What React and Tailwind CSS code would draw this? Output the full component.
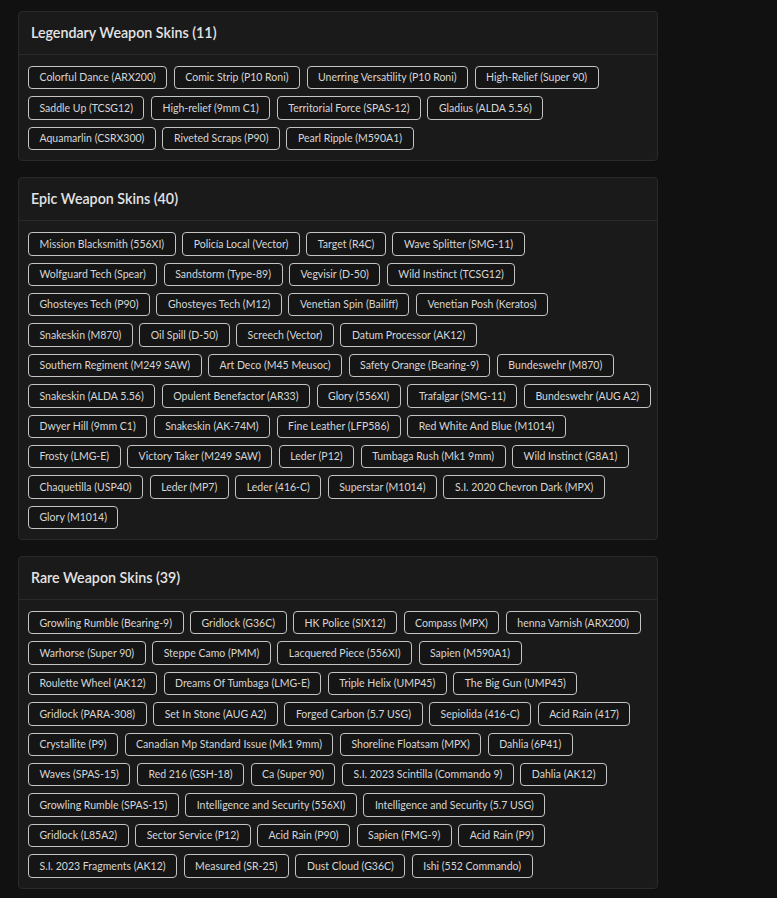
import React from "react";

// rows are kept as the page shows them so each line breaks at the same chip
const SECTIONS = [
  {
    title: "Legendary Weapon Skins",
    rows: [
      ["Colorful Dance (ARX200)", "Comic Strip (P10 Roni)", "Unerring Versatility (P10 Roni)", "High-Relief (Super 90)"],
      ["Saddle Up (TCSG12)", "High-relief (9mm C1)", "Territorial Force (SPAS-12)", "Gladius (ALDA 5.56)"],
      ["Aquamarlin (CSRX300)", "Riveted Scraps (P90)", "Pearl Ripple (M590A1)"],
    ],
  },
  {
    title: "Epic Weapon Skins",
    rows: [
      ["Mission Blacksmith (556XI)", "Policía Local (Vector)", "Target (R4C)", "Wave Splitter (SMG-11)"],
      ["Wolfguard Tech (Spear)", "Sandstorm (Type-89)", "Vegvisir (D-50)", "Wild Instinct (TCSG12)"],
      ["Ghosteyes Tech (P90)", "Ghosteyes Tech (M12)", "Venetian Spin (Bailiff)", "Venetian Posh (Keratos)"],
      ["Snakeskin (M870)", "Oil Spill (D-50)", "Screech (Vector)", "Datum Processor (AK12)"],
      ["Southern Regiment (M249 SAW)", "Art Deco (M45 Meusoc)", "Safety Orange (Bearing-9)", "Bundeswehr (M870)"],
      ["Snakeskin (ALDA 5.56)", "Opulent Benefactor (AR33)", "Glory (556XI)", "Trafalgar (SMG-11)", "Bundeswehr (AUG A2)"],
      ["Dwyer Hill (9mm C1)", "Snakeskin (AK-74M)", "Fine Leather (LFP586)", "Red White And Blue (M1014)"],
      ["Frosty (LMG-E)", "Victory Taker (M249 SAW)", "Leder (P12)", "Tumbaga Rush (Mk1 9mm)", "Wild Instinct (G8A1)"],
      ["Chaquetilla (USP40)", "Leder (MP7)", "Leder (416-C)", "Superstar (M1014)", "S.I. 2020 Chevron Dark (MPX)"],
      ["Glory (M1014)"],
    ],
  },
  {
    title: "Rare Weapon Skins",
    rows: [
      ["Growling Rumble (Bearing-9)", "Gridlock (G36C)", "HK Police (SIX12)", "Compass (MPX)", "henna Varnish (ARX200)"],
      ["Warhorse (Super 90)", "Steppe Camo (PMM)", "Lacquered Piece (556XI)", "Sapien (M590A1)"],
      ["Roulette Wheel (AK12)", "Dreams Of Tumbaga (LMG-E)", "Triple Helix (UMP45)", "The Big Gun (UMP45)"],
      ["Gridlock (PARA-308)", "Set In Stone (AUG A2)", "Forged Carbon (5.7 USG)", "Sepiolida (416-C)", "Acid Rain (417)"],
      ["Crystallite (P9)", "Canadian Mp Standard Issue (Mk1 9mm)", "Shoreline Floatsam (MPX)", "Dahlia (6P41)"],
      ["Waves (SPAS-15)", "Red 216 (GSH-18)", "Ca (Super 90)", "S.I. 2023 Scintilla (Commando 9)", "Dahlia (AK12)"],
      ["Growling Rumble (SPAS-15)", "Intelligence and Security (556XI)", "Intelligence and Security (5.7 USG)"],
      ["Gridlock (L85A2)", "Sector Service (P12)", "Acid Rain (P90)", "Sapien (FMG-9)", "Acid Rain (P9)"],
      ["S.I. 2023 Fragments (AK12)", "Measured (SR-25)", "Dust Cloud (G36C)", "Ishi (552 Commando)"],
    ],
  },
];

const SkinChip = ({ name }) => (
  <span className="flex h-[23.4px] shrink-0 items-center whitespace-nowrap rounded border border-[#c4c4c4] bg-[#151515] px-[10.5px] text-[10.5px] leading-none text-[#d6d6d6]">
    {name}
  </span>
);

const SkinSection = ({ title, rows }) => {
  const count = rows.reduce((n, r) => n + r.length, 0);
  return (
    <section className="w-[640px] rounded-sm border border-[#2a2a2a] bg-[#1a1a1a]">
      <div className="flex h-[43px] items-center border-b border-[#2a2a2a] px-3">
        <h3 className="text-[14.25px] font-semibold text-[#e4e4e4]">
          {title} ({count})
        </h3>
      </div>
      <div className="flex flex-col gap-y-[7px] px-[9px] pb-[10px] pt-[11px]">
        {rows.map((row, i) => (
          <div key={i} className="flex gap-[6.5px]">
            {row.map((s) => (
              <SkinChip key={s} name={s} />
            ))}
          </div>
        ))}
      </div>
    </section>
  );
};

export default function App() {
  return (
    <div
      className="min-h-[898px] bg-[#111111] pl-[18px] pt-[11px]"
      style={{ fontFamily: 'Lato, "Noto Sans", sans-serif' }}
    >
      <div className="flex flex-col gap-4">
        {SECTIONS.map((sec) => (
          <SkinSection key={sec.title} title={sec.title} rows={sec.rows} />
        ))}
      </div>
    </div>
  );
}
